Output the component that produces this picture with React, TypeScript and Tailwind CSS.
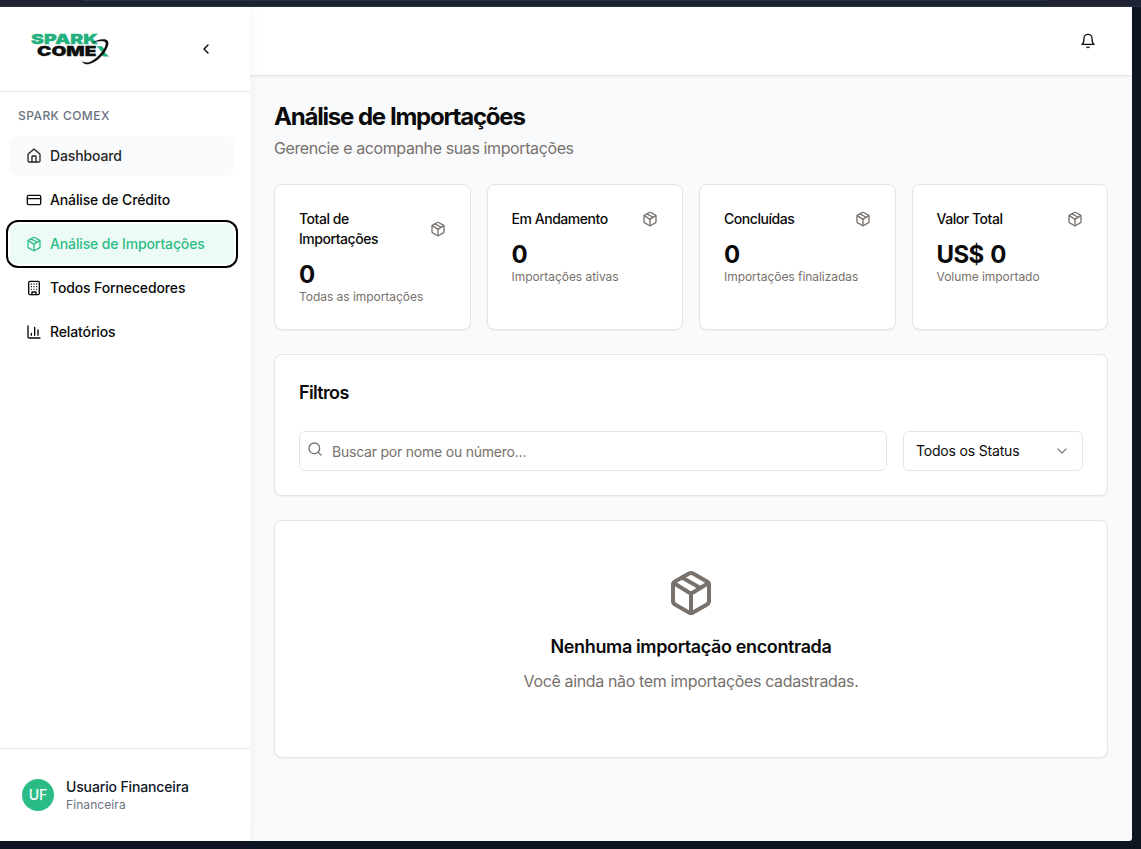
import React from "react";
import { ChevronDown, ChevronLeft, CreditCard, Search } from "lucide-react";

type IconProps = { className?: string };

const svgProps = {
  viewBox: "0 0 24 24",
  fill: "none",
  stroke: "currentColor",
  strokeWidth: 2,
  strokeLinecap: "round",
  strokeLinejoin: "round",
} as const;

function BoxIcon({ className }: IconProps) {
  return (
    <svg {...svgProps} className={className}>
      <path d="M11 21.73a2 2 0 0 0 2 0l7-4A2 2 0 0 0 21 16V8a2 2 0 0 0-1-1.73l-7-4a2 2 0 0 0-2 0l-7 4A2 2 0 0 0 3 8v8a2 2 0 0 0 1 1.73z" />
      <path d="M12 22V12" />
      <path d="m3.3 7 7.703 4.734a2 2 0 0 0 1.994 0L20.7 7" />
      <path d="m7.5 4.27 9 5.15" />
    </svg>
  );
}

function HouseIcon({ className }: IconProps) {
  return (
    <svg {...svgProps} className={className}>
      <path d="M15 21v-8a1 1 0 0 0-1-1h-4a1 1 0 0 0-1 1v8" />
      <path d="M3 10a2 2 0 0 1 .709-1.528l7-5.999a2 2 0 0 1 2.582 0l7 5.999A2 2 0 0 1 21 10v9a2 2 0 0 1-2 2H5a2 2 0 0 1-2-2z" />
    </svg>
  );
}

function BuildingIcon({ className }: IconProps) {
  return (
    <svg {...svgProps} className={className}>
      <rect width="16" height="20" x="4" y="2" rx="2" />
      <path d="M9 22v-4h6v4" />
      <path d="M8 6h.01M16 6h.01M12 6h.01M12 10h.01M12 14h.01M16 10h.01M16 14h.01M8 10h.01M8 14h.01" />
    </svg>
  );
}

function ChartIcon({ className }: IconProps) {
  return (
    <svg {...svgProps} className={className}>
      <path d="M3 3v16a2 2 0 0 0 2 2h16" />
      <path d="M18 17V9M13 17V5M8 17v-3" />
    </svg>
  );
}

function BellIcon({ className }: IconProps) {
  return (
    <svg {...svgProps} className={className}>
      <path d="M6 8a6 6 0 0 1 12 0c0 7 3 9 3 9H3s3-2 3-9" />
      <path d="M10.3 21a1.94 1.94 0 0 0 3.4 0" />
    </svg>
  );
}

function Logo() {
  return (
    <svg viewBox="0 -5 80 42" className="h-[42px] w-20 shrink-0">
      <g fontFamily="Inter, sans-serif" fontWeight="900" strokeWidth="0.3">
        <text x="1" y="11.200" fontSize="13.500" fill="#22b07d" stroke="#22b07d" textLength="67" lengthAdjust="spacingAndGlyphs">
          SPARK
        </text>
        <text x="7" y="23.200" fontSize="13.500" fill="#0c0f0e" stroke="#0c0f0e" textLength="59.500" lengthAdjust="spacingAndGlyphs">
          COME
        </text>
      </g>
      <path d="M67 13.300h5l2.500 3-2.800 2.600zM73.400 18.200l5.600 5.200h-5.800l-2.500-2.700z" fill="#22b07d" />
      <path
        d="M61.500 10.300C69 5.500 78.600 4.500 78.300 10.300c-.5 8.200-11.300 19.700-20.300 20.900-2.800.3-4.800-.9-6-3 2.600 1.800 5.600 1.900 9 .2C68.500 24.500 76 15.300 75.800 10.500c-.2-3.600-7.300-2.800-14.300-.2z"
        fill="#0c0f0e"
        stroke="#0c0f0e"
        strokeWidth="0.15"
      />
    </svg>
  );
}

const navItems = [
  { label: "Dashboard", Icon: HouseIcon, state: "bg-[#f9fafb] text-[#262626]" },
  { label: "Análise de Crédito", Icon: CreditCard, state: "text-[#0a0a0a]" },
  {
    label: "Análise de Importações",
    Icon: BoxIcon,
    state: "bg-[#edfbf6] text-[#2ebd85] outline-2 outline-offset-2 outline-black",
  },
  { label: "Todos Fornecedores", Icon: BuildingIcon, state: "text-[#0a0a0a]" },
  { label: "Relatórios", Icon: ChartIcon, state: "text-[#0a0a0a]" },
];

function Sidebar() {
  return (
    <aside className="relative z-10 flex w-[250px] shrink-0 flex-col bg-white shadow-[2px_0_12px_rgba(0,0,0,0.04)]">
      <div className="flex h-[85px] items-center justify-between border-b border-[#e5e7eb] pr-9 pl-[30px]">
        <Logo />
        <ChevronLeft className="size-4 text-black" />
      </div>
      <nav className="flex flex-1 flex-col px-[10px] pt-[13px]">
        <h2 className="mb-[9px] px-2 text-[12px] leading-[22px] font-medium tracking-[0.45px] text-[#6b7280]">SPARK COMEX</h2>
        <ul className="flex flex-col gap-1">
          {navItems.map(({ label, Icon, state }) => (
            <li key={label} className={`flex h-10 w-56 items-center gap-2 rounded-lg px-4 text-sm font-medium ${state}`}>
              <Icon className="size-4 shrink-0" />
              <span className="tracking-[-0.13px] whitespace-nowrap">{label}</span>
            </li>
          ))}
        </ul>
      </nav>
      <div className="flex h-[93px] items-center gap-3 border-t border-[#e5e7eb] pl-[22px]">
        <div className="flex size-8 items-center justify-center rounded-full bg-[#2bbc86] text-sm font-medium text-white">UF</div>
        <div className="flex flex-col">
          <span className="text-sm leading-5 font-medium tracking-[-0.14px] text-[#111827]">Usuario Financeira</span>
          <span className="text-xs leading-4 tracking-[0.08px] text-[#6b7280]">Financeira</span>
        </div>
      </div>
    </aside>
  );
}

const cardClass = "rounded-lg border border-[#e5e5e5] bg-white shadow-[0_1px_2px_rgba(0,0,0,0.05)]";

const stats = [
  { title: "Total de Importações", value: "0", note: "Todas as importações" },
  { title: "Em Andamento", value: "0", note: "Importações ativas" },
  { title: "Concluídas", value: "0", note: "Importações finalizadas" },
  { title: "Valor Total", value: "US$ 0", note: "Volume importado" },
];

export default function App() {
  return (
    <div className="flex h-[849px] w-[1141px] flex-col overflow-hidden bg-[#0f1423] font-['Inter','Liberation_Sans',sans-serif] text-[#0a0a0a]">
      <div className="h-[7px] shrink-0 border-b border-[#2b3042] bg-[#1e2333]">
        <div className="mr-[95px] ml-[84px] h-px bg-[#2b3145]" />
      </div>
      <div className="flex h-[834px] w-[1132px] overflow-hidden rounded-br-[3px] bg-[#f8fafc]">
        <Sidebar />
        <div className="flex flex-1 flex-col">
          <header className="flex h-[69px] shrink-0 items-center justify-end border-b border-[#e5e7eb] bg-white pr-9 shadow-[0_1px_2px_rgba(0,0,0,0.05)]">
            <BellIcon className="size-4" />
          </header>
          <main className="flex flex-1 flex-col gap-6 px-6 pt-[25px]">
            <div>
              <h1 className="text-2xl leading-8 font-bold tracking-[-1.22px] [word-spacing:0.5px]">Análise de Importações</h1>
              <p className="mt-[3px] text-base leading-6 tracking-[-0.39px] text-[#78716c]">Gerencie e acompanhe suas importações</p>
            </div>
            <section className="grid grid-cols-4 gap-4">
              {stats.map((s) => (
                <div key={s.title} className={`h-[146px] p-6 ${cardClass}`}>
                  <div className="flex items-center justify-between pb-2">
                    <h3 className="text-sm leading-5 font-medium tracking-[-0.46px]">{s.title}</h3>
                    <BoxIcon className="size-4 shrink-0 text-[#78716c]" />
                  </div>
                  <div className="h-8 pt-[2px] text-2xl leading-8 font-bold tracking-[-0.6px] [word-spacing:1.5px]">{s.value}</div>
                  <p className="text-xs leading-4 tracking-[-0.04px] text-[#78716c]">{s.note}</p>
                </div>
              ))}
            </section>
            <section className={`h-[142px] p-6 ${cardClass}`}>
              <h2 className="text-lg leading-7 font-semibold tracking-[-0.65px]">Filtros</h2>
              <div className="mt-6 flex gap-4">
                <div className="flex h-10 flex-1 gap-[9px] rounded-md border border-[#e5e5e5] pl-[7px]">
                  <Search className="mt-[9px] size-4 text-[#78716c]" />
                  <span className="pt-[10px] text-sm leading-5 tracking-[-0.22px] text-[#78716c]">Buscar por nome ou número...</span>
                </div>
                <div className="flex h-10 w-[180px] items-center justify-between rounded-md border border-[#e5e5e5] px-3">
                  <span className="text-sm tracking-[-0.18px]">Todos os Status</span>
                  <ChevronDown className="size-4 opacity-50" />
                </div>
              </div>
            </section>
            <section className={`flex h-[238px] flex-col items-center pt-12 ${cardClass}`}>
              <BoxIcon className="size-12 text-[#78716c]" />
              <h2 className="mt-4 text-lg leading-7 font-semibold tracking-[-0.37px]">Nenhuma importação encontrada</h2>
              <p className="mt-2 text-base leading-6 tracking-[-0.36px] text-[#78716c]">Você ainda não tem importações cadastradas.</p>
            </section>
          </main>
        </div>
      </div>
    </div>
  );
}
